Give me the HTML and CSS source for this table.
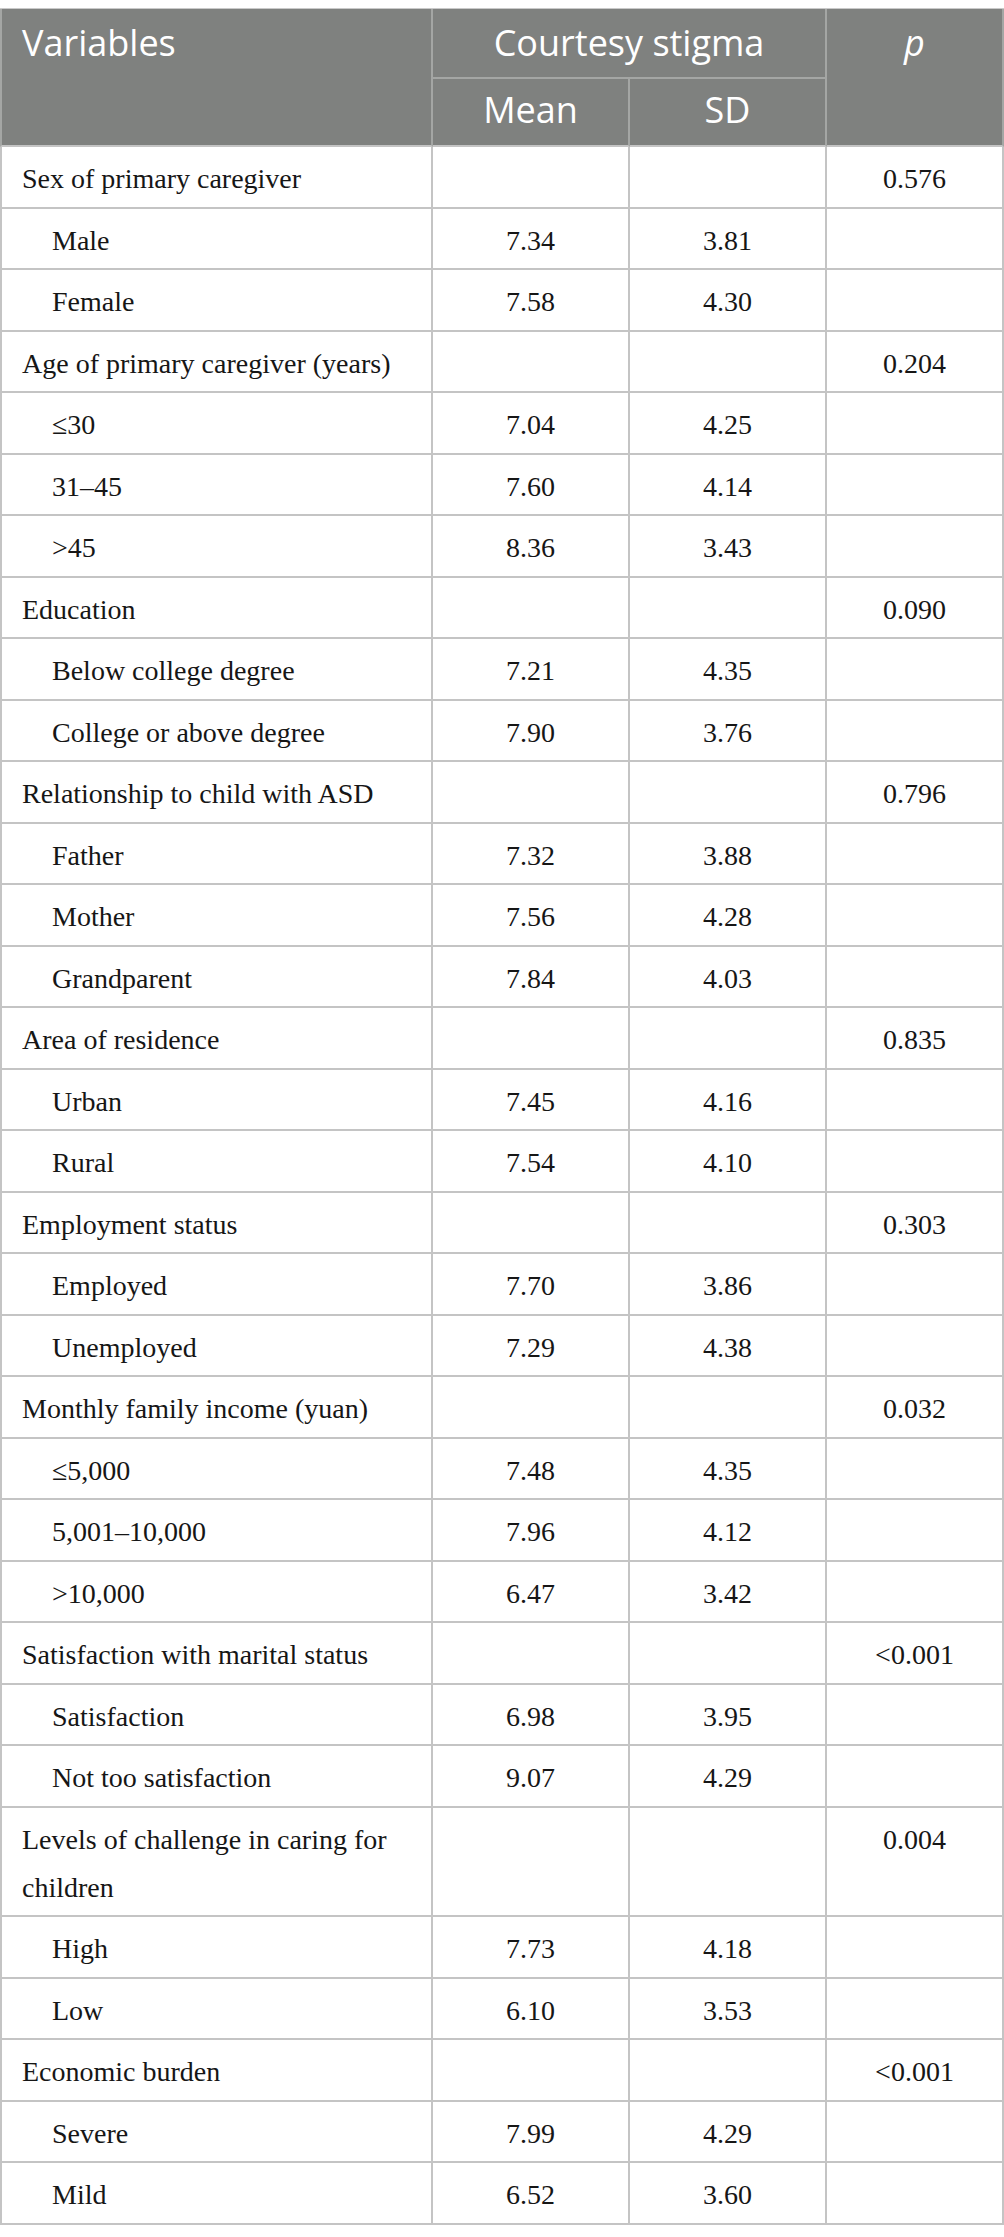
FILE: index.html
```html
<!DOCTYPE html>
<html lang="en">
<head>
<meta charset="utf-8">
<title>Courtesy stigma</title>
<link rel="stylesheet" href="styles.css">
</head>
<body>
<div class="wrap">
<table class="stats">
  <colgroup>
    <col class="c-var">
    <col class="c-num">
    <col class="c-num">
    <col class="c-p">
  </colgroup>
  <thead>
    <tr>
      <th class="h-var" rowspan="2">Variables</th>
      <th class="h-group" colspan="2">Courtesy stigma</th>
      <th class="h-p" rowspan="2"><i>p</i></th>
    </tr>
    <tr>
      <th class="h-sub">Mean</th>
      <th class="h-sub">SD</th>
    </tr>
  </thead>
  <tbody>
    <tr class="cat"><td>Sex of primary caregiver</td><td></td><td></td><td>0.576</td></tr>
    <tr class="sub"><td>Male</td><td>7.34</td><td>3.81</td><td></td></tr>
    <tr class="sub"><td>Female</td><td>7.58</td><td>4.30</td><td></td></tr>
    <tr class="cat"><td>Age of primary caregiver (years)</td><td></td><td></td><td>0.204</td></tr>
    <tr class="sub"><td>≤30</td><td>7.04</td><td>4.25</td><td></td></tr>
    <tr class="sub"><td>31–45</td><td>7.60</td><td>4.14</td><td></td></tr>
    <tr class="sub"><td>&gt;45</td><td>8.36</td><td>3.43</td><td></td></tr>
    <tr class="cat"><td>Education</td><td></td><td></td><td>0.090</td></tr>
    <tr class="sub"><td>Below college degree</td><td>7.21</td><td>4.35</td><td></td></tr>
    <tr class="sub"><td>College or above degree</td><td>7.90</td><td>3.76</td><td></td></tr>
    <tr class="cat"><td>Relationship to child with ASD</td><td></td><td></td><td>0.796</td></tr>
    <tr class="sub"><td>Father</td><td>7.32</td><td>3.88</td><td></td></tr>
    <tr class="sub"><td>Mother</td><td>7.56</td><td>4.28</td><td></td></tr>
    <tr class="sub"><td>Grandparent</td><td>7.84</td><td>4.03</td><td></td></tr>
    <tr class="cat"><td>Area of residence</td><td></td><td></td><td>0.835</td></tr>
    <tr class="sub"><td>Urban</td><td>7.45</td><td>4.16</td><td></td></tr>
    <tr class="sub"><td>Rural</td><td>7.54</td><td>4.10</td><td></td></tr>
    <tr class="cat"><td>Employment status</td><td></td><td></td><td>0.303</td></tr>
    <tr class="sub"><td>Employed</td><td>7.70</td><td>3.86</td><td></td></tr>
    <tr class="sub"><td>Unemployed</td><td>7.29</td><td>4.38</td><td></td></tr>
    <tr class="cat"><td>Monthly family income (yuan)</td><td></td><td></td><td>0.032</td></tr>
    <tr class="sub"><td>≤5,000</td><td>7.48</td><td>4.35</td><td></td></tr>
    <tr class="sub"><td>5,001–10,000</td><td>7.96</td><td>4.12</td><td></td></tr>
    <tr class="sub"><td>&gt;10,000</td><td>6.47</td><td>3.42</td><td></td></tr>
    <tr class="cat"><td>Satisfaction with marital status</td><td></td><td></td><td>&lt;0.001</td></tr>
    <tr class="sub"><td>Satisfaction</td><td>6.98</td><td>3.95</td><td></td></tr>
    <tr class="sub"><td>Not too satisfaction</td><td>9.07</td><td>4.29</td><td></td></tr>
    <tr class="cat"><td>Levels of challenge in caring for children</td><td></td><td></td><td>0.004</td></tr>
    <tr class="sub"><td>High</td><td>7.73</td><td>4.18</td><td></td></tr>
    <tr class="sub"><td>Low</td><td>6.10</td><td>3.53</td><td></td></tr>
    <tr class="cat"><td>Economic burden</td><td></td><td></td><td>&lt;0.001</td></tr>
    <tr class="sub"><td>Severe</td><td>7.99</td><td>4.29</td><td></td></tr>
    <tr class="sub"><td>Mild</td><td>6.52</td><td>3.60</td><td></td></tr>
  </tbody>
</table>
</div>
</body>
</html>
```

FILE: styles.css
```css
html, body {
  margin: 0;
  padding: 0;
  background: #ffffff;
}

.wrap {
  padding-top: 8px;
}

.stats {
  width: 1004px;
  table-layout: fixed;
  border-collapse: separate;
  border-spacing: 0;
  border-top: 1px solid #c9c9c9;
}

.c-var { width: 433px; }
.c-num { width: 197px; }
.c-p { width: 177px; }

.stats th {
  background: #7f817f;
  color: #ffffff;
  font-family: "Open Sans", "Noto Sans", sans-serif;
  font-weight: 400;
  font-size: 36px;
  line-height: 48px;
  text-align: center;
  vertical-align: top;
  padding: 10px 0 10px 0;
  border-right: 2px solid #a4a6a4;
  border-bottom: 2px solid #c4c4c4;
  white-space: nowrap;
}

.stats th.h-var {
  text-align: left;
  padding-left: 20px;
  border-left: 2px solid #a4a6a4;
}

.stats th.h-group {
  border-bottom: 2px solid #a4a6a4;
}

.stats th.h-sub {
  padding: 7px 0 11px 0;
}

.stats th.h-p i {
  font-style: italic;
}

.stats td {
  font-family: "Liberation Serif", "Times New Roman", serif;
  font-size: 28px;
  line-height: 48px;
  color: #161616;
  text-align: center;
  vertical-align: top;
  padding: 8px 0 3.5px 0;
  border-right: 2px solid #c4c4c4;
  border-bottom: 2px solid #c4c4c4;
}

.stats td:first-child {
  text-align: left;
  padding-left: 20px;
  padding-right: 12px;
  border-left: 2px solid #c4c4c4;
}

.stats tr.sub td:first-child {
  padding-left: 50px;
}
```
